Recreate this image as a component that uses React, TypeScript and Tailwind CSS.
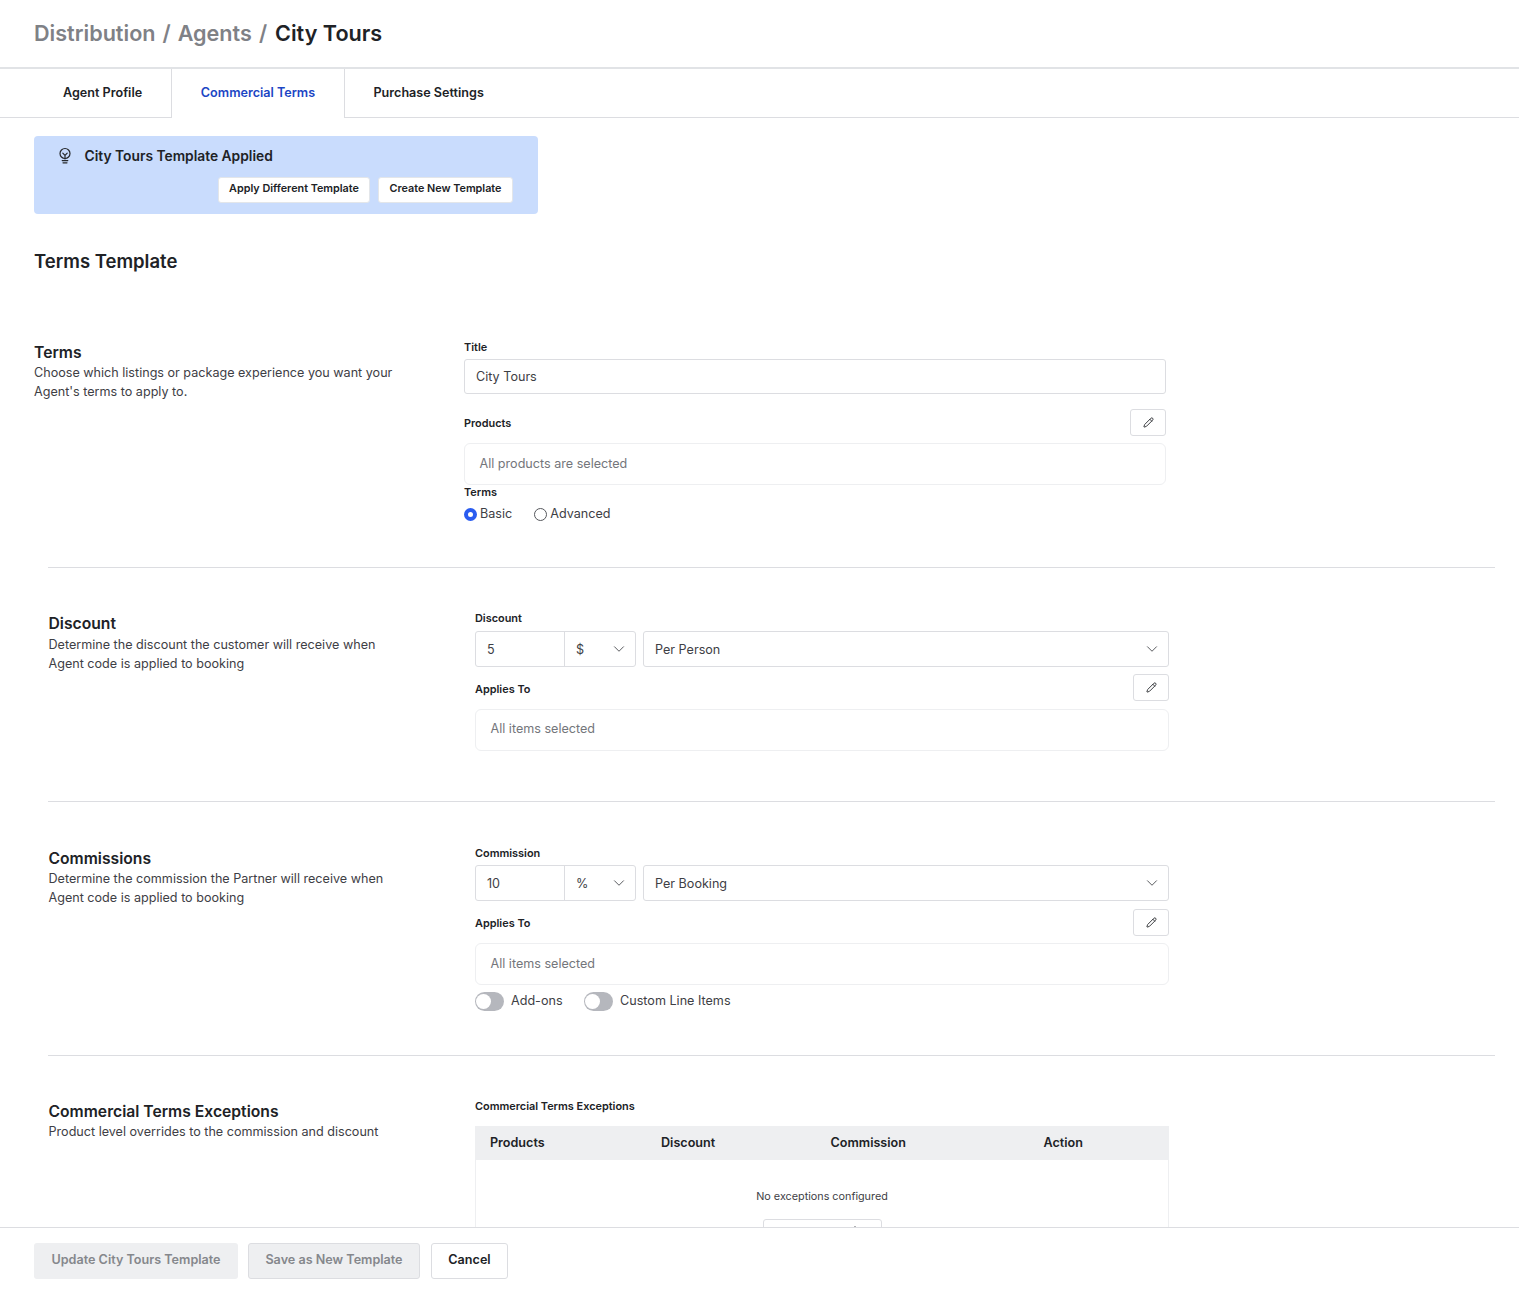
import { ChevronDown, Pencil, Plus } from "lucide-react";
import React from "react";

function BulbIcon() {
  return (
    <svg width="16" height="18" viewBox="0 0 16 18" fill="none" stroke="#26282c" strokeWidth="1.2" strokeLinecap="round">
      <circle cx="8" cy="6.5" r="5" />
      <path d="M5.8 6.2 8 8.4l2.2-2.2M8 8.4v3.6M5.2 13.6h5.6M6 15.8h4" />
    </svg>
  );
}

function FieldLabel({ children, className = "" }: { children: React.ReactNode; className?: string }) {
  return <div className={`text-[10.9px] leading-[14px] font-semibold text-[#202226] ${className}`}>{children}</div>;
}

function EditButton() {
  return (
    <button className="flex h-[27px] w-[36px] items-center justify-center rounded-[3px] border border-[#dcdde1] bg-white text-[#2b2d31]">
      <Pencil size={11} strokeWidth={2} />
    </button>
  );
}

function ReadOnlyBox({ children, textClass = "" }: { children: React.ReactNode; textClass?: string }) {
  return (
    <div className="flex h-[42px] items-center rounded-[6px] border border-[#eeeff1] px-[14.5px] text-[12.6px] text-[#74767b]">
      <span className={textClass}>{children}</span>
    </div>
  );
}

function SectionIntro({ title, lines, descClass = "" }: { title: string; lines: string[]; descClass?: string }) {
  return (
    <div>
      <h3 className="text-[15.7px] leading-[20px] font-semibold text-[#202226]">{title}</h3>
      <p className={`text-[12.6px] leading-[19px] text-[#3e4045] ${descClass}`}>
        {lines.map((line) => (
          <span key={line} className="block">
            {line}
          </span>
        ))}
      </p>
    </div>
  );
}

function AmountRow({ amount, unit, per }: { amount: string; unit: string; per: string }) {
  return (
    <div className="flex h-[36px] gap-[7px] text-[12.6px] text-[#3e4045]">
      <div className="flex w-[161px] rounded-[3px] border border-[#dcdde1]">
        <div className="flex w-[89px] items-center border-r border-[#dcdde1] pt-[2px] pl-[11px]">{amount}</div>
        <div className="flex flex-1 items-center justify-between pl-[11px] pr-[7px]">
          <span className="pt-[2px]">{unit}</span>
          <ChevronDown size={18} strokeWidth={1.3} className="text-[#55575c]" />
        </div>
      </div>
      <div className="flex flex-1 items-center justify-between rounded-[3px] border border-[#dcdde1] pl-[11px] pr-[7px]">
        <span className="pt-[2px]">{per}</span>
        <ChevronDown size={18} strokeWidth={1.3} className="text-[#55575c]" />
      </div>
    </div>
  );
}

function Toggle({ label }: { label: string }) {
  return (
    <div className="flex items-center gap-[7px] text-[12.6px] text-[#3e4045]">
      <span className="flex h-[19px] w-[29px] items-center rounded-full bg-[#b5b7bd] pl-[1px]">
        <span className="h-[15px] w-[15px] rounded-full bg-white" />
      </span>
      <span className="-mt-[1px]">{label}</span>
    </div>
  );
}

function AppliesTo({ labelClass }: { labelClass: string }) {
  return (
    <div className="flex h-[27px] items-center justify-between">
      <FieldLabel className={labelClass}>Applies To</FieldLabel>
      <EditButton />
    </div>
  );
}

export default function App() {
  return (
    <div className="flex h-[1293px] flex-col overflow-hidden bg-white font-['Inter',sans-serif] text-[#202226]">
      <div className="flex-1 overflow-hidden">
        <div className="flex h-[69px] items-center border-b-2 border-[#e1e3e6] px-[34px] text-[21.6px] font-semibold">
          <span className="text-[#7f8186]">Distribution</span>
          <span className="mx-[7px] text-[#7f8186]">/</span>
          <span className="text-[#7f8186]">Agents</span>
          <span className="ml-[7px] mr-[8px] text-[#7f8186]">/</span>
          <span>City Tours</span>
        </div>

        <div className="flex h-[49px] text-[12.6px] font-semibold">
          <div className="flex w-[172px] items-center border-b border-r border-[#dcdde1] pl-[63px]">Agent Profile</div>
          <div className="flex w-[173px] items-center justify-center border-r border-[#dcdde1] pb-[1px] text-[#1c46c4]">
            Commercial Terms
          </div>
          <div className="flex flex-1 items-center border-b border-[#dcdde1] pl-[28.5px]">Purchase Settings</div>
        </div>

        <div className="mt-[18px] ml-[34px] h-[78px] w-[504px] rounded-[4px] bg-[#c9dcfd] px-[23px] pt-[11px]">
          <div className="flex items-center gap-[11.5px] text-[13.8px] leading-[18px] font-semibold text-[#202226]">
            <BulbIcon />
            City Tours Template Applied
          </div>
          <div className="mt-[12px] flex justify-end gap-[8px] pr-[2px] text-[10.8px] font-semibold">
            <button className="h-[26px] w-[152px] rounded-[3px] border border-[#e3e6ea] bg-white pb-[2px]">Apply Different Template</button>
            <button className="h-[26px] w-[135px] rounded-[3px] border border-[#e3e6ea] bg-white pb-[2px]">Create New Template</button>
          </div>
        </div>

        <h2 className="mt-[35px] ml-[34px] text-[18.5px] leading-[24px] font-semibold">Terms Template</h2>

        <section className="mt-[67px] ml-[34px] flex h-[227px]">
          <div className="w-[430px] pt-[3px]">
            <SectionIntro
              title="Terms"
              lines={["Choose which listings or package experience you want your", "Agent's terms to apply to."]}
            />
          </div>
          <div className="w-[702px]">
            <FieldLabel>Title</FieldLabel>
            <div className="mt-[5px] flex h-[35px] items-center rounded-[3px] border border-[#dcdde1] px-[11px] pt-[1px] text-[12.6px] text-[#3e4045]">
              City Tours
            </div>
            <div className="mt-[15px] flex h-[27px] items-center justify-between">
              <FieldLabel className="mt-[1px]">Products</FieldLabel>
              <EditButton />
            </div>
            <div className="mt-[7px]">
              <ReadOnlyBox>All products are selected</ReadOnlyBox>
            </div>
            <FieldLabel>Terms</FieldLabel>
            <div className="mt-[6px] flex items-center text-[12.6px] text-[#3e4045]">
              <span className="h-[13px] w-[13px] rounded-full border-[4px] border-[#2a5cf0] bg-white" />
              <span className="ml-[3px] mr-[22px]">Basic</span>
              <span className="h-[13px] w-[13px] rounded-full border border-[#55575c] bg-white" />
              <span className="ml-[3px]">Advanced</span>
            </div>
          </div>
        </section>

        <div className="mr-[24px] ml-[48px] border-t border-[#dcdde1]">
          <section className="flex h-[233px] pt-[36px]">
            <div className="w-[427px] pl-[0.5px] pt-[10px]">
              <SectionIntro
                title="Discount"
                descClass="mt-[1px]"
                lines={["Determine the discount the customer will receive when", "Agent code is applied to booking"]}
              />
            </div>
            <div className="w-[694px] pt-[7px]">
              <FieldLabel>Discount</FieldLabel>
              <div className="mt-[6px]">
                <AmountRow amount="5" unit="$" per="Per Person" />
              </div>
              <div className="mt-[7px]">
                <AppliesTo labelClass="mt-[2px]" />
              </div>
              <div className="mt-[8px]">
                <ReadOnlyBox textClass="-mt-[1px]">All items selected</ReadOnlyBox>
              </div>
            </div>
          </section>
        </div>

        <div className="mr-[24px] ml-[48px] border-t border-[#dcdde1]">
          <section className="flex h-[253px] pt-[36px]">
            <div className="w-[427px] pl-[0.5px] pt-[11px]">
              <SectionIntro
                title="Commissions"
                lines={["Determine the commission the Partner will receive when", "Agent code is applied to booking"]}
              />
            </div>
            <div className="w-[694px] pt-[8px]">
              <FieldLabel>Commission</FieldLabel>
              <div className="mt-[5px]">
                <AmountRow amount="10" unit="%" per="Per Booking" />
              </div>
              <div className="mt-[8px]">
                <AppliesTo labelClass="mt-[1px]" />
              </div>
              <div className="mt-[7px]">
                <ReadOnlyBox>All items selected</ReadOnlyBox>
              </div>
              <div className="mt-[7px] flex gap-[21.5px]">
                <Toggle label="Add-ons" />
                <Toggle label="Custom Line Items" />
              </div>
            </div>
          </section>
        </div>

        <div className="mr-[24px] ml-[48px] border-t border-[#dcdde1]">
          <section className="flex pt-[36px]">
            <div className="w-[427px] pl-[0.5px] pt-[10px]">
              <SectionIntro title="Commercial Terms Exceptions" lines={["Product level overrides to the commission and discount"]} />
            </div>
            <div className="w-[694px] pt-[7px]">
              <FieldLabel>Commercial Terms Exceptions</FieldLabel>
              <div className="mt-[13px] border-x border-[#eeeff1]">
                <div className="grid h-[34px] grid-cols-[171px_169.5px_213px_1fr] items-center bg-[#eeeff1] pl-[14px] text-[12.6px] font-semibold">
                  <span>Products</span>
                  <span>Discount</span>
                  <span>Commission</span>
                  <span>Action</span>
                </div>
                <div className="flex flex-col items-center pt-[30px]">
                  <div className="text-[10.8px] leading-[14px] text-[#3e4045]">No exceptions configured</div>
                  <button className="mt-[15px] flex h-[36px] w-[119px] justify-end rounded-[3px] border border-[#dcdde1] pt-[4px] pr-[20px] text-[#55575c]">
                    <Plus size={12} />
                  </button>
                </div>
              </div>
            </div>
          </section>
        </div>
      </div>

      <div className="flex h-[66px] shrink-0 items-center border-t border-[#dcdde1] bg-white px-[34px] text-[12.6px] font-semibold">
        <button className="h-[36px] w-[204px] rounded-[3px] bg-[#eeeff1] text-[#85878c]">Update City Tours Template</button>
        <button className="ml-[10px] h-[36px] w-[172px] rounded-[3px] border border-[#dcdde1] bg-[#eeeff1] text-[#85878c]">Save as New Template</button>
        <button className="ml-[11px] h-[36px] w-[77px] rounded-[3px] border border-[#dcdde1] bg-white">Cancel</button>
      </div>
    </div>
  );
}
